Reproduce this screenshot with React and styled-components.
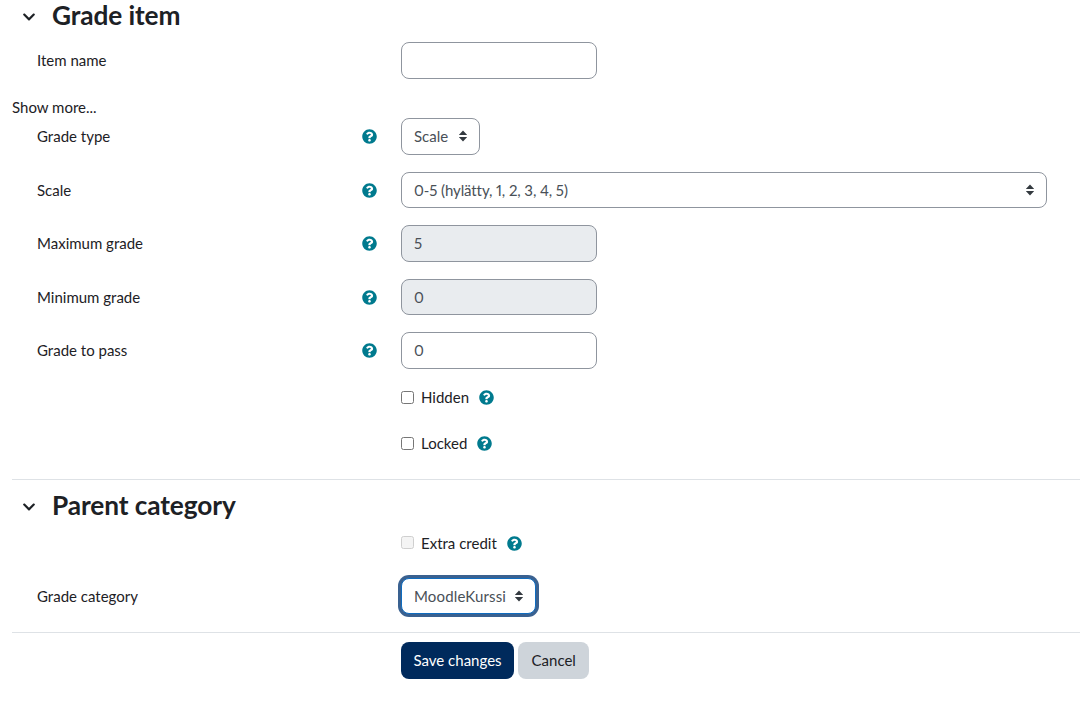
import React from "react";
import styled, { createGlobalStyle } from "styled-components";
import { FaQuestionCircle, FaChevronDown } from "react-icons/fa";

const GlobalStyle = createGlobalStyle`
	html, body {
		margin: 0;
		padding: 0;
		background: #fff;
		overflow: hidden;
	}
	body {
		font-family: Lato, "Liberation Sans", sans-serif;
		font-size: 15px;
		line-height: 22.5px;
		color: #1d2125;
		font-variant-numeric: proportional-nums;
	}
`;

const arrows =
	"data:image/svg+xml," +
	encodeURIComponent(
		'<svg xmlns="http://www.w3.org/2000/svg" width="10" height="12"><path d="M5 0.5 9.2 5H0.8z M5 11.5 0.8 7h8.4z" fill="#343a40"/></svg>'
	);

const Page = styled.form`
	padding-left: 12px;
	height: 705px;
	box-sizing: border-box;
	overflow: hidden;
`;

const Section = styled.section`
	padding-bottom: ${(p) => p.$bottom || 0}px;
	border-bottom: 1px solid #dee2e6;
`;

const Heading = styled.h3`
	display: flex;
	align-items: center;
	margin: ${(p) => p.$top || 0}px 0 0;
	height: 30px;
	padding-left: 10px;
	font-size: 26.25px;
	line-height: 30px;
	font-weight: 700;
	letter-spacing: -0.1px;
	color: #1d2125;
`;

const Toggle = styled.span`
	display: flex;
	width: 30px;
	margin-top: 4px;
	font-size: 14px;
	color: #1d2125;
`;

const Row = styled.div`
	display: grid;
	grid-template-columns: 350px 39px 646px;
	align-items: center;
	margin-top: ${(p) => p.$top ?? 17}px;
`;

const Label = styled.label`
	padding-left: 25px;
`;

const HelpSlot = styled.span`
	display: flex;
	margin-top: 1px;
	color: #007a8e;
	font-size: 15px;
`;

const TextInput = styled.input`
	display: block;
	width: 196px;
	height: 36.5px;
	box-sizing: border-box;
	padding: 6px 12px;
	font: inherit;
	color: #495057;
	background: ${(p) => (p.disabled ? "#e9ecef" : "#fff")};
	border: 1px solid #8f959e;
	border-radius: 8px;
	outline: none;
	opacity: 1;
`;

const Select = styled.select`
	display: block;
	width: ${(p) => (p.$wide ? "646px" : "auto")};
	height: 36.5px;
	box-sizing: border-box;
	padding: 6px 30px 6px 12px;
	font: inherit;
	font-variant-numeric: proportional-nums;
	letter-spacing: ${(p) => (p.$wide ? "-0.1px" : "normal")};
	color: #495057;
	background: #fff url("${arrows}") no-repeat right 11px center;
	border: 1px solid #8f959e;
	border-radius: 8px;
	outline: none;
	appearance: none;
`;

const FocusSelect = styled(Select)`
	letter-spacing: 0.15px;
	padding-right: 28px;
	border-color: #0f6cbf;
	box-shadow: 0 0 0 3px #3a6190;
`;

const CheckRow = styled.div`
	display: flex;
	align-items: center;
	margin-top: ${(p) => p.$top}px;
	margin-left: 389px;
`;

const Check = styled.input`
	appearance: none;
	width: 13px;
	height: 13px;
	margin: 0 7px 0 0;
	box-sizing: border-box;
	border: 1px solid ${(p) => (p.disabled ? "#cfcfcf" : "#767676")};
	border-radius: 2.5px;
	background: ${(p) => (p.disabled ? "#f4f4f4" : "#fff")};
`;

const CheckHelp = styled(HelpSlot)`
	margin-left: 10px;
`;

const ShowMore = styled.a`
	display: block;
	margin-top: 17px;
	color: #1d2125;
`;

const Buttons = styled.div`
	display: flex;
	gap: 4px;
	margin: 9px 0 0 389px;
`;

const Button = styled.button`
	height: 37px;
	padding: 0 ${(p) => (p.$primary ? 12.5 : 13.5)}px;
	font: inherit;
	color: ${(p) => (p.$primary ? "#fff" : "#1d2125")};
	background: ${(p) => (p.$primary ? "#002a5c" : "#ced4da")};
	border: 0;
	border-radius: 8px;
`;

const Help = () => (
	<HelpSlot>
		<FaQuestionCircle />
	</HelpSlot>
);

const FieldRow = ({ label, help = true, top, children }) => (
	<Row $top={top}>
		<Label>{label}</Label>
		{help ? <Help /> : <span />}
		<div>{children}</div>
	</Row>
);

const CheckField = ({ label, top, disabled }) => (
	<CheckRow $top={top}>
		<Check type="checkbox" disabled={disabled} />
		<span>{label}</span>
		<CheckHelp>
			<FaQuestionCircle />
		</CheckHelp>
	</CheckRow>
);

export default () => {
	return (
		<Page onSubmit={(e) => e.preventDefault()}>
			<GlobalStyle />
			<Section $bottom={24}>
				<Heading>
					<Toggle>
						<FaChevronDown />
					</Toggle>
					Grade item
				</Heading>
				<FieldRow label="Item name" help={false} top={12}>
					<TextInput type="text" />
				</FieldRow>
				<ShowMore>Show more...</ShowMore>
				<FieldRow label="Grade type" top={0}>
					<Select defaultValue="Scale">
						<option>Scale</option>
					</Select>
				</FieldRow>
				<FieldRow label="Scale">
					<Select $wide>
						<option>0-5 (hylätty, 1, 2, 3, 4, 5)</option>
					</Select>
				</FieldRow>
				<FieldRow label="Maximum grade">
					<TextInput type="text" defaultValue="5" disabled />
				</FieldRow>
				<FieldRow label="Minimum grade">
					<TextInput type="text" defaultValue="0" disabled />
				</FieldRow>
				<FieldRow label="Grade to pass">
					<TextInput type="text" defaultValue="0" />
				</FieldRow>
				<CheckField label="Hidden" top={17.5} />
				<CheckField label="Locked" top={23.5} />
			</Section>
			<Section $bottom={18}>
				<Heading $top={10}>
					<Toggle>
						<FaChevronDown />
					</Toggle>
					Parent category
				</Heading>
				<CheckField label="Extra credit" top={12} disabled />
				<FieldRow label="Grade category" help={false} top={23.5}>
					<FocusSelect>
						<option>MoodleKurssi</option>
					</FocusSelect>
				</FieldRow>
			</Section>
			<Buttons>
				<Button $primary>Save changes</Button>
				<Button>Cancel</Button>
			</Buttons>
		</Page>
	);
};
